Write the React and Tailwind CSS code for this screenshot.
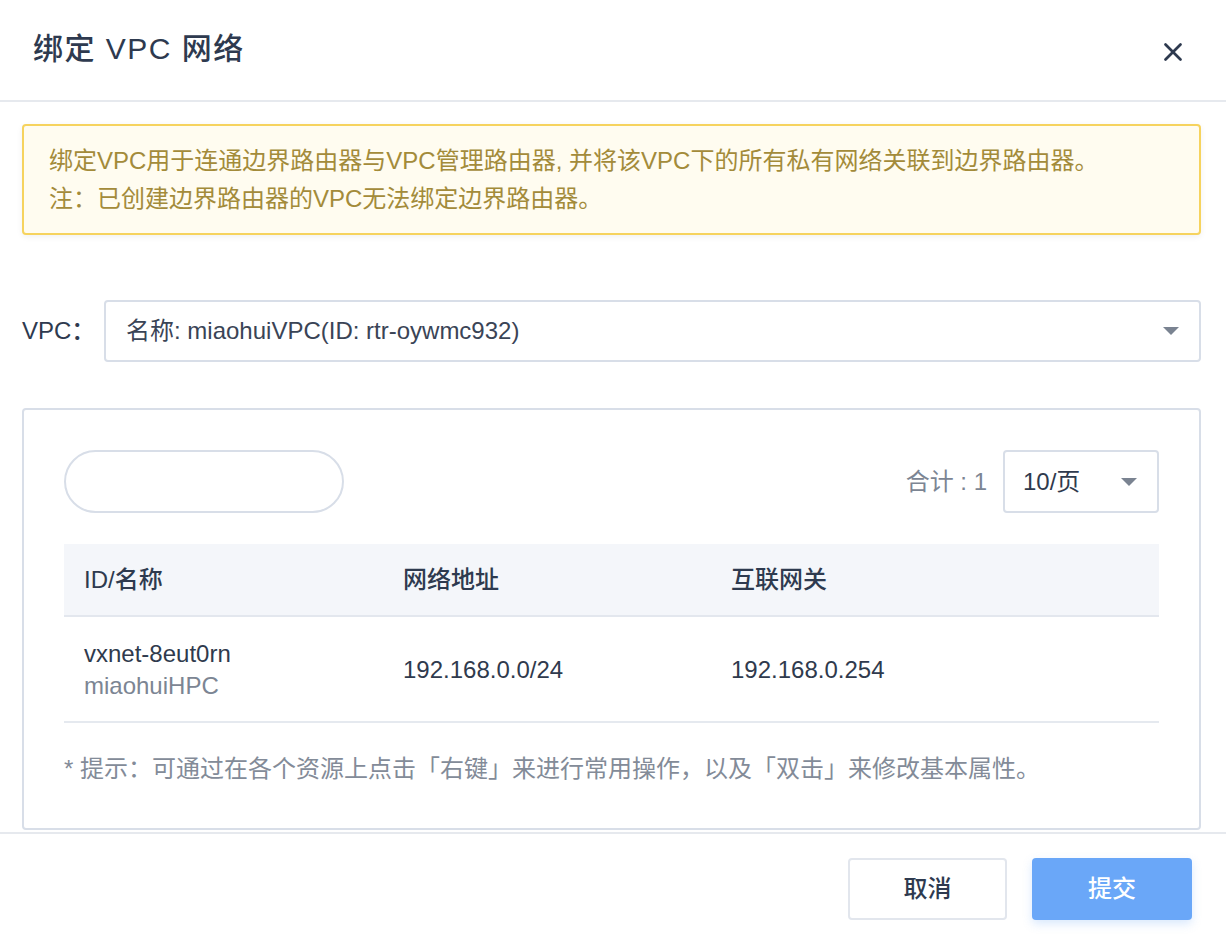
import { X } from 'lucide-react'

const font = { fontFamily: '"Liberation Sans", "Noto Sans CJK SC", sans-serif' }

function Caret() {
  return (
    <svg width="16" height="8" viewBox="0 0 16 8" className="shrink-0">
      <path d="M0 0 L16 0 L8 8 Z" fill="#7a8391" />
    </svg>
  )
}

const rows = [
  { id: 'vxnet-8eut0rn', name: 'miaohuiHPC', cidr: '192.168.0.0/24', gw: '192.168.0.254' },
]

export default function App() {
  return (
    <div className="w-[1226px] h-[940px] bg-white flex flex-col overflow-hidden text-[24px] text-[#2f3a4d]" style={font}>
      {/* header */}
      <div className="h-[102px] shrink-0 border-b-2 border-[#e6e9ee] flex items-center justify-between pl-[33px] pr-[40px]">
        <h2 className="text-[30px] font-medium tracking-[1.5px] text-[#2e3a4f] -mt-[4px]">绑定 VPC 网络</h2>
        <X size={30} strokeWidth={2.2} className="text-[#2e3a4f] mt-[4px] -mr-[2px]" />
      </div>

      {/* body */}
      <div className="h-[730px] shrink-0 pl-[22px] pr-[25px] pt-[22px] overflow-hidden">
        <div className="h-[111px] border-2 border-[#f6d35e] bg-[#fffcf0] rounded-[4px] shadow-[0_2px_6px_rgba(0,0,0,0.06)] px-[25px] pt-[16px] text-[#a38b3a] leading-[38px]">
          <p>绑定VPC用于连通边界路由器与VPC管理路由器, 并将该VPC下的所有私有网络关联到边界路由器。</p>
          <p>注：已创建边界路由器的VPC无法绑定边界路由器。</p>
        </div>

        <div className="mt-[65px] flex items-center h-[62px]">
          <label className="w-[82px] font-medium text-[#2e3a4f]">VPC：</label>
          <div className="flex-1 h-[62px] border-2 border-[#d8dee8] rounded-[4px] flex items-center justify-between pl-[20px] pr-[20px] text-[#3a4456]">
            <span>名称: miaohuiVPC(ID: rtr-oywmc932)</span>
            <Caret />
          </div>
        </div>

        <div className="mt-[46px] h-[422px] border-2 border-[#d8dee8] rounded-[4px] px-[40px] pt-[40px]">
          <div className="flex items-center justify-between">
            <div className="w-[280px] h-[63px] border-2 border-[#d8dee8] rounded-full" />
            <div className="flex items-center">
              <span className="text-[#7c8593] mr-[16px]">合计 : 1</span>
              <div className="w-[156px] h-[63px] border-2 border-[#d8dee8] rounded-[4px] flex items-center justify-between pl-[18px] pr-[20px]">
                <span>10/页</span>
                <Caret />
              </div>
            </div>
          </div>

          <div className="mt-[31px]">
            <div className="grid grid-cols-[319px_328px_1fr] h-[73px] items-center bg-[#f4f6fa] border-b-2 border-[#e3e7ee] font-medium text-[#2e3a4f]">
              <div className="pl-[20px]">ID/名称</div>
              <div className="pl-[20px]">网络地址</div>
              <div className="pl-[20px]">互联网关</div>
            </div>
            {rows.map((r) => (
              <div key={r.id} className="grid grid-cols-[319px_328px_1fr] h-[106px] items-center border-b-2 border-[#e5e9ef] text-[#2f3a4d]">
                <div className="pl-[20px] leading-[32px] pt-[2px]">
                  <div>{r.id}</div>
                  <div className="text-[#7c8593]">{r.name}</div>
                </div>
                <div className="pl-[20px] pt-[2px]">{r.cidr}</div>
                <div className="pl-[20px] pt-[2px]">{r.gw}</div>
              </div>
            ))}
          </div>

          <p className="mt-[30px] leading-[32px] text-[#838b98]">* 提示：可通过在各个资源上点击「右键」来进行常用操作，以及「双击」来修改基本属性。</p>
        </div>
      </div>

      {/* footer */}
      <div className="flex-1 border-t-2 border-[#e6e9ee] flex justify-end items-start gap-[25px] pt-[24px] pr-[34px]">
        <button className="w-[159px] h-[62px] border-2 border-[#e2e6ed] rounded-[4px] bg-white font-medium text-[#2e3a4f]">取消</button>
        <button className="w-[160px] h-[62px] rounded-[4px] bg-[#6aa7f8] text-white font-medium shadow-[0_4px_10px_rgba(106,167,248,0.25)]">提交</button>
      </div>
    </div>
  )
}
